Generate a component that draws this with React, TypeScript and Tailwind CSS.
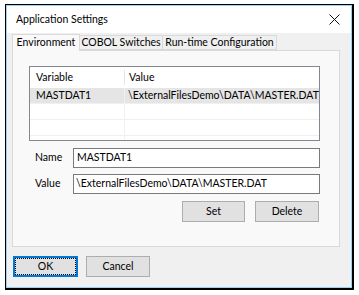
import React from "react";

const font = { fontFamily: 'Lato, "Noto Sans", sans-serif' };

const rows = [
  { name: "MASTDAT1", value: "\\ExternalFilesDemo\\DATA\\MASTER.DAT", selected: true },
  { name: "", value: "" },
  { name: "", value: "" },
];

function Button({ label, focused = false, className = "" }: { label: string; focused?: boolean; className?: string }) {
  return (
    <div
      className={`flex h-[21px] items-center justify-center bg-[#e1e1e1] text-black ${
        focused ? "border-2 border-[#0078d7]" : "border border-[#adadad]"
      } ${className}`}
    >
      {focused ? (
        <div className="flex h-full w-full items-center justify-center border border-dotted border-black">{label}</div>
      ) : (
        label
      )}
    </div>
  );
}

export default function App() {
  return (
    <div className="h-[295px] w-[359px] whitespace-nowrap bg-white pl-[5px] pt-[4px] text-[10.5px] text-black" style={font}>
      <div className="h-[286px] w-[349px] border border-r-2 border-b-2 border-black">
        <div className="flex h-full flex-col border border-[#9cd0f3] bg-[#f0f0f0]">
          {/* title bar */}
          <div className="flex h-[27px] items-center justify-between bg-white pl-[9px] pr-[8px]">
            <span className="text-[10.5px] leading-none">Application Settings</span>
            <svg width="11" height="11" viewBox="0 0 11 11" className="mr-[3px]">
              <path d="M0.5 0.5 L10.5 10.5 M10.5 0.5 L0.5 10.5" stroke="#111" strokeWidth="1" />
            </svg>
          </div>

          {/* tabs */}
          <div className="flex items-end pl-[5px] pt-[1px]">
            <div className="z-10 -mb-px flex h-[17px] w-[68px] items-center justify-center border border-b-0 border-[#d9d9d9] bg-[#f9f9f9]">
              Environment
            </div>
            <div className="flex h-[15px] w-[83px] items-center justify-center border border-l-0 border-[#d9d9d9] bg-[#f0f0f0]">
              COBOL Switches
            </div>
            <div className="flex h-[15px] w-[114px] items-center justify-center border border-l-0 border-[#d9d9d9] bg-[#f0f0f0]">
              Run-time Configuration
            </div>
          </div>

          {/* panel */}
          <div className="ml-[5px] flex h-[197px] w-[328px] flex-col border border-[#d9d9d9] bg-[#f9f9f9] pl-[16px] pt-[15px]">
            <div className="flex h-[75px] w-[291px] flex-col overflow-hidden border border-[#828790] bg-white">
              <div className="flex h-[21px] shrink-0 items-center">
                <div className="w-[95px] border-r border-[#e5e5e5] pl-[6px]">Variable</div>
                <div className="pl-[4px]">Value</div>
              </div>
              {rows.map((r, i) => (
                <div
                  key={i}
                  className={`flex h-[16px] shrink-0 items-center border-b border-[#f0f0f0] ${
                    r.selected ? "bg-[#e5e5e5]" : ""
                  }`}
                >
                  <div className="flex h-full w-[95px] items-center border-r border-[#f0f0f0] pl-[6px]">{r.name}</div>
                  <div className="pl-[3px]">{r.value}</div>
                </div>
              ))}
              <div className="flex h-[16px] shrink-0">
                <div className="h-full w-[95px] border-r border-[#f0f0f0]" />
              </div>
            </div>

            <div className="mt-[7px] flex flex-col gap-[6px]">
              <div className="flex items-center">
                <span className="w-[44px] pl-[6px]">Name</span>
                <div className="flex h-[20px] w-[247px] items-center border border-[#7a7a7a] bg-white pl-[3px]">MASTDAT1</div>
              </div>
              <div className="flex items-center">
                <span className="w-[44px] pl-[6px]">Value</span>
                <div className="flex h-[20px] w-[247px] items-center border border-[#7a7a7a] bg-white pl-[2px]">
                  \ExternalFilesDemo\DATA\MASTER.DAT
                </div>
              </div>
            </div>

            <div className="mt-[7px] flex gap-[10px] pl-[153px]">
              <Button label="Set" className="w-[63px]" />
              <Button label="Delete" className="w-[64px]" />
            </div>
          </div>

          {/* footer */}
          <div className="mt-[9px] flex gap-[8px] pl-[6px]">
            <Button label="OK" focused className="w-[65px]" />
            <Button label="Cancel" className="w-[64px]" />
          </div>
        </div>
      </div>
    </div>
  );
}
